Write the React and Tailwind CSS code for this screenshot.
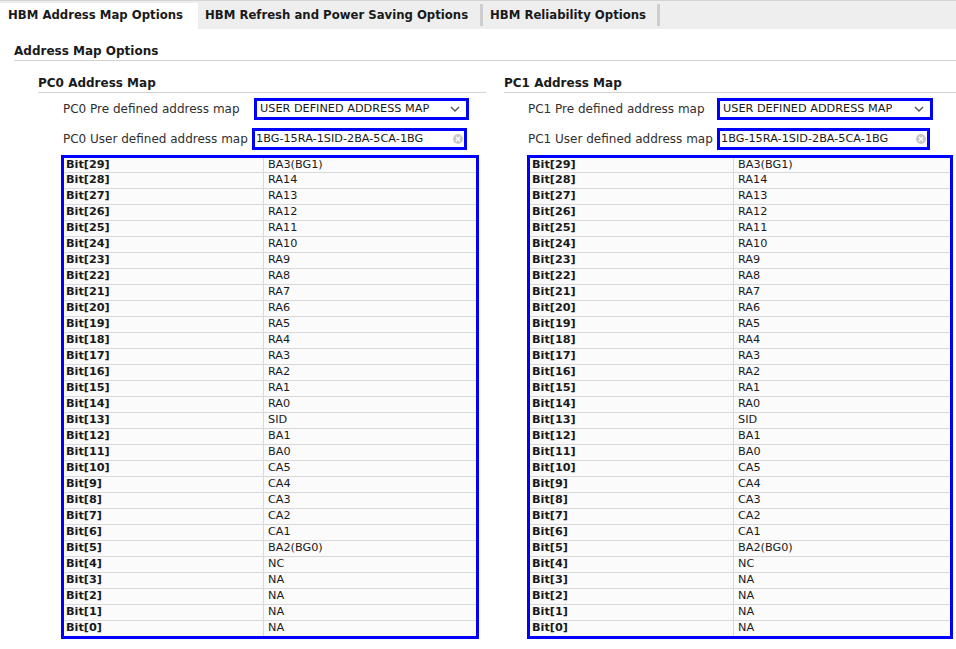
import React from "react";

const bits = [
  [29, "BA3(BG1)"], [28, "RA14"], [27, "RA13"], [26, "RA12"], [25, "RA11"],
  [24, "RA10"], [23, "RA9"], [22, "RA8"], [21, "RA7"], [20, "RA6"],
  [19, "RA5"], [18, "RA4"], [17, "RA3"], [16, "RA2"], [15, "RA1"],
  [14, "RA0"], [13, "SID"], [12, "BA1"], [11, "BA0"], [10, "CA5"],
  [9, "CA4"], [8, "CA3"], [7, "CA2"], [6, "CA1"], [5, "BA2(BG0)"],
  [4, "NC"], [3, "NA"], [2, "NA"], [1, "NA"], [0, "NA"],
];

const Chevron = () => (
  <svg width="10" height="6" viewBox="0 0 10 6" className="shrink-0">
    <polyline points="1,1 5,5 9,1" fill="none" stroke="#555" strokeWidth="1.4" />
  </svg>
);

const ClearIcon = () => (
  <svg width="10" height="10" viewBox="0 0 10 10" className="shrink-0">
    <circle cx="5" cy="5" r="5" fill="#c9c9c9" />
    <path d="M3 3 L7 7 M7 3 L3 7" stroke="#fff" strokeWidth="1.3" />
  </svg>
);

const AddressMap = ({ pc, isLeft }) => (
  <div className={isLeft ? "w-[448px]" : "w-[452px]"}>
    <div className="pt-[14px] pb-[1px] border-b border-[#d2d2d2]">
      <div className="h-[16px] leading-[16px] text-[12px] font-bold text-[#1a1a1a]">{pc} Address Map</div>
    </div>

    <div className="flex items-center mt-[5px]">
      <div className={`${isLeft ? "w-[216px] pl-[25px]" : "w-[213px] pl-[24px]"} text-[12px] text-[#2f2f2f]`}>
        {pc} Pre defined address map
      </div>
      <div className={`${isLeft ? "w-[215px]" : "w-[216px]"} h-[22px] border-[3px] border-[#0000ff] bg-white flex items-center justify-between pl-[3px] pr-[6px] text-[11.25px] text-[#1a1a1a]`}>
        <span>USER DEFINED ADDRESS MAP</span>
        <Chevron />
      </div>
    </div>

    <div className="flex items-center mt-[8px]">
      <div className={`${isLeft ? "w-[214px] pl-[25px]" : "w-[213px] pl-[24px]"} text-[12px] text-[#2f2f2f]`}>
        {pc} User defined address map
      </div>
      <div className={`${isLeft ? "w-[215px]" : "w-[213px]"} h-[22px] border-[3px] border-[#0000ff] bg-white flex items-center justify-between pl-[1px] pr-[1px] text-[11.25px] text-[#1a1a1a]`}>
        <span>1BG-15RA-1SID-2BA-5CA-1BG</span>
        <ClearIcon />
      </div>
    </div>

    <div className={`${isLeft ? "w-[418px]" : "w-[426px]"} ml-[23px] mt-[5px] border-[3px] border-[#0000ff] bg-[#fbfbfb] text-[11.25px] text-[#1a1a1a]`}>
      {bits.map(([b, v], i) => (
        <div
          key={b}
          className={`flex items-center ${i === bits.length - 1 ? "h-[15px]" : i === 0 ? "h-[15px] border-b border-[#d9d9d9]" : "h-[16px] border-b border-[#d9d9d9]"}`}
        >
          <div className={`${isLeft ? "w-[200px]" : "w-[204px]"} h-full flex items-center pl-[2px] border-r border-[#d9d9d9] font-bold`}>
            Bit[{b}]
          </div>
          <div className="pl-[4px]">{v}</div>
        </div>
      ))}
    </div>
  </div>
);

export default function App() {
  return (
    <div className="w-[956px] h-[649px] overflow-hidden bg-white font-['DejaVu_Sans',sans-serif]">
      <div className="h-[29px] bg-[#eeeeee] border-t border-[#d4d4d4] pt-[2px] flex items-stretch text-[11.7px] font-bold text-[#1a1a1a]">
        <div className="w-[198px] bg-white pl-[8px] flex items-center">HBM Address Map Options</div>
        <div className="w-[282px] pl-[7px] flex items-center">HBM Refresh and Power Saving Options</div>
        <div className="w-[3px] my-[1px] mb-[3px] bg-[#cdcdcd]" />
        <div className="w-[174px] pl-[7px] flex items-center">HBM Reliability Options</div>
        <div className="w-[3px] my-[1px] mb-[3px] bg-[#cdcdcd]" />
      </div>

      <div className="pl-[14px]">
        <div className="pt-[14px] pb-[1px] border-b border-[#d2d2d2]">
          <div className="h-[16px] leading-[16px] text-[12px] font-bold text-[#1a1a1a]">Address Map Options</div>
        </div>
        <div className="flex gap-[18px] pl-[24px]">
          <AddressMap pc="PC0" isLeft />
          <AddressMap pc="PC1" />
        </div>
      </div>
    </div>
  );
}
